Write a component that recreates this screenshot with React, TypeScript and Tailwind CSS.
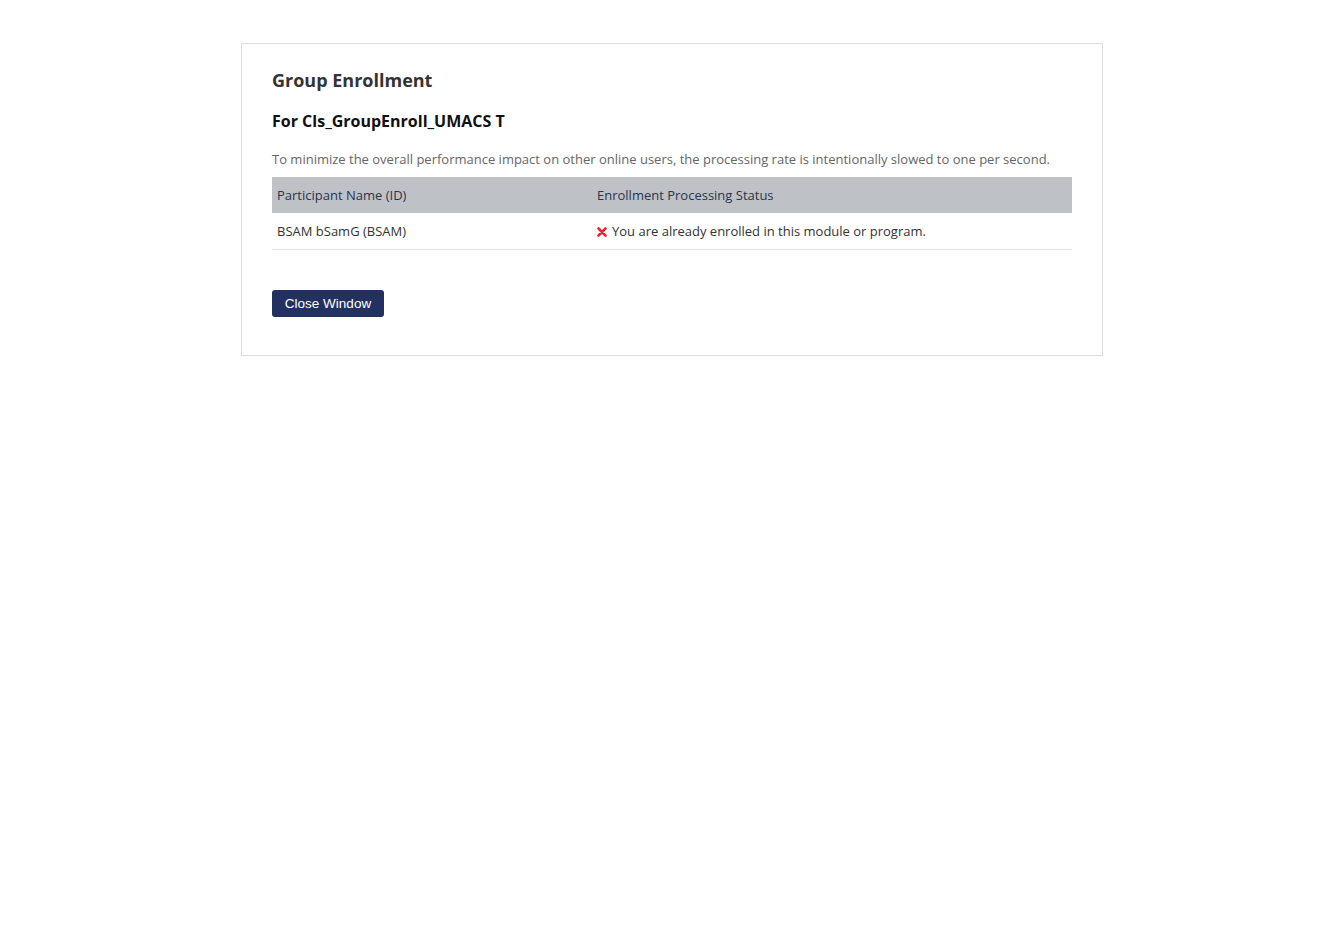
const rows = [
  { name: 'BSAM bSamG (BSAM)', status: 'You are already enrolled in this module or program.', failed: true },
];

export default function App() {
  return (
    <div className="min-h-screen bg-white pt-[43px] font-['Open_Sans',sans-serif]">
      <div className="mx-auto w-[862px] border border-[#dddddd] px-[30px] pt-[23px] pb-[38px]">
        <h1 className="text-[18px] leading-[26px] font-bold text-[#333333]">Group Enrollment</h1>
        <h2 className="mt-[16px] text-[16px] leading-[24px] font-bold text-[#111111]">For Cls_GroupEnroll_UMACS T</h2>
        <p className="mt-[17px] text-[13px] leading-[18px] text-[#666666]">
          To minimize the overall performance impact on other online users, the processing rate is intentionally slowed to one
          per second.
        </p>
        <table className="mt-[9px] w-full border-collapse text-[13px] text-[#2b3350]">
          <thead>
            <tr className="h-[36px] bg-[#bec2c6]">
              <th className="w-[320px] px-[5px] pt-[2px] text-left font-normal">Participant Name (ID)</th>
              <th className="px-[5px] pt-[2px] text-left font-normal">Enrollment Processing Status</th>
            </tr>
          </thead>
          <tbody>
            {rows.map((r) => (
              <tr key={r.name} className="h-[36px] border-b border-[#e5e5e5] text-[#333333]">
                <td className="px-[5px] pt-[2px]">{r.name}</td>
                <td className="px-[5px] pt-[2px]">
                  <span className="flex items-center gap-[5px]">
                    {r.failed && (
                      <svg width="10" height="10" viewBox="0 0 10 10" aria-hidden="true">
                        <path d="M1.5 1.5 L8.5 8.5 M8.5 1.5 L1.5 8.5" stroke="#e8262b" strokeWidth="2.6" strokeLinecap="round" />
                      </svg>
                    )}
                    {r.status}
                  </span>
                </td>
              </tr>
            ))}
          </tbody>
        </table>
        <button className="mt-[40px] h-[27px] w-[112px] rounded-[3px] bg-[#22315f] pt-[2px] font-['Liberation_Sans',Arial,sans-serif] text-[13.5px] text-white">
          Close Window
        </button>
      </div>
    </div>
  );
}
